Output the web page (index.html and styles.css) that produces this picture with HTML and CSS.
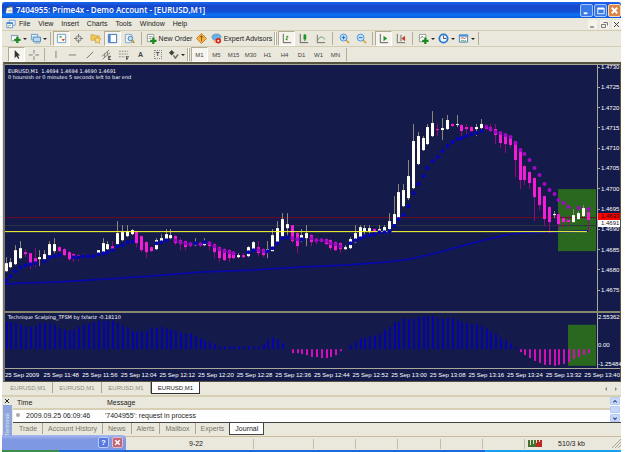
FILE: index.html
```html
<!DOCTYPE html>
<html lang="en">
<head>
<meta charset="utf-8">
<title>7404955: Prime4x - Demo Account - [EURUSD,M1]</title>
<link rel="stylesheet" href="styles.css">
</head>
<body>
<div class="window">
  <header class="titlebar">
    <svg class="icon" viewBox="0 0 12 12"><path d="M2 4 9 2v8H1z" fill="#f4f1dc"/><path d="M1 5q4-5 8-2" stroke="#6a7c5a" fill="none"/><path d="M4 7h4" stroke="#a4a08c"/></svg>
    <h1>7404955: Prime4x - Demo Account - [EURUSD,M1]</h1>
    <button class="cap" aria-label="Minimize"><svg viewBox="0 0 12 12"><path d="M3 9h4" stroke="#fff" stroke-width="2"/></svg></button>
    <button class="cap" aria-label="Maximize"><svg viewBox="0 0 12 12"><path d="M3 3.5h7v6H3z" stroke="#fff" fill="none"/><path d="M3 4h7" stroke="#fff" stroke-width="2"/></svg></button>
    <button class="cap cap-close" aria-label="Close"><svg viewBox="0 0 12 12"><path d="m3 3 6 6M9 3 3 9" stroke="#fff" stroke-width="2"/></svg></button>
  </header>

  <nav class="menubar">
    <svg class="icon" viewBox="0 0 12 12"><path d="M4 1.500h7v6H4z" fill="#eef6ff" stroke="#6a9ad0"/><path d="M1 4.500h7v6H1z" fill="#fff" stroke="#4a86cc"/><path d="M1 5h7" stroke="#4a86cc" stroke-width="2"/><path d="m3 9 1-2 1 1 1-1" stroke="#58a058" fill="none"/></svg>
    <button>File</button><button>View</button><button>Insert</button><button>Charts</button><button>Tools</button><button>Window</button><button>Help</button>
    <div class="mdi">
      <button aria-label="Minimize chart"><svg viewBox="0 0 9 9"><path d="M2 7h4" stroke="#444"/></svg></button>
      <button aria-label="Restore chart"><svg viewBox="0 0 9 9"><path d="M3.500 2.500h4v3M1.500 4.500h4v3h-4z" stroke="#777" fill="none"/></svg></button>
      <button aria-label="Close chart"><svg viewBox="0 0 9 9"><path d="m2 2 5 5M7 2 2 7" stroke="#444"/></svg></button>
    </div>
  </nav>

  <div class="toolbar">
    <button class="tool drop" aria-label="New chart"><svg viewBox="0 0 12 12"><path d="M1.500 2.500h7v6h-7z" fill="#fff" stroke="#8aa"/><path d="M1 3h8" stroke="#7aa0c0"/><path d="M8 4v7M4.500 7.500h7" stroke="#1c8a20" stroke-width="2.500"/></svg></button>
    <button class="tool drop" aria-label="Profiles"><svg viewBox="0 0 12 12"><path d="M1.500 1.500h7v6h-7z" fill="#d8ecfa" stroke="#6a98c4"/><path d="M3.500 4.500h8v5h-8z" fill="#b8d8f4" stroke="#5084b8"/><path d="M5 11h6" stroke="#86a8c8"/></svg></button>
    <i class="sep"></i>
    <button class="tool on" aria-label="Market Watch"><svg viewBox="0 0 12 12"><path d="M1.500 1.500h9v9h-9z" fill="#fff" stroke="#6c9cc8"/><path d="m3 5 2-2 2 2z" fill="#2a9a30"/><path d="m6 7 2 2 2-3z" fill="#d04420"/></svg></button>
    <button class="tool" aria-label="Data Window"><svg viewBox="0 0 12 12"><circle cx="6" cy="6" r="3" fill="none" stroke="#777"/><path d="M6 1v4M6 7v4M1 6h4M7 6h4" stroke="#777"/></svg></button>
    <button class="tool" aria-label="Navigator"><svg viewBox="0 0 12 12"><path d="M1 2h4l1 1h4v5H1z" fill="#f4c850" stroke="#b48a30" stroke-width=".5"/><path d="m8 4 1 2 3 .5-2 2 .5 3L8 10l-2 1 .5-3-2-1.500 2.500-.5z" fill="#ffe080" stroke="#b88820" stroke-width=".6"/></svg></button>
    <button class="tool on" aria-label="Terminal"><svg viewBox="0 0 12 12"><path d="M1.500 1.500h9v9h-9z" fill="#fff" stroke="#2c68bc"/><path d="M3 2v8" stroke="#4c88d4" stroke-width="2"/></svg></button>
    <button class="tool" aria-label="Strategy Tester"><svg viewBox="0 0 12 12"><path d="M1.500 1.500h7v9h-7z" fill="#eef4fa" stroke="#88a8c4"/><circle cx="7" cy="6" r="2.500" fill="#b8dcf4" stroke="#5080a8"/><path d="m9 8 2 3" stroke="#b89040" stroke-width="2"/></svg></button>
    <i class="sep wide"></i>
    <button class="tool text"><svg viewBox="0 0 12 12"><path d="M1.500 1.500h7v8h-7z" fill="#fff" stroke="#8a9a8a"/><path d="M3 4h4M3 6h3" stroke="#999"/><path d="M8 5v7M4.500 8.500h7" stroke="#1c8a20" stroke-width="2.500"/></svg><span>New Order</span></button>
    <button class="tool" aria-label="MetaEditor"><svg viewBox="0 0 12 12"><path d="m6 .5 5.500 5.500L6 11.500.5 6z" fill="#f4b848" stroke="#c47c20"/><path d="M6 3v6M4 5l2-2 2 2" stroke="#8c5010" fill="none"/></svg></button>
    <button class="tool text expert"><svg viewBox="0 0 12 12"><path d="M1 5q0-4 5-4t5 4l-3 3H3z" fill="#6ab0e8" stroke="#386ca0" stroke-width=".5"/><path d="M2 7q3 2 5-1l1 5H4z" fill="#f0c070"/><circle cx="8" cy="8.500" r="3" fill="#dc2018"/><path d="M7 7.500h2v2H7z" fill="#fff"/></svg><span>Expert Advisors</span></button>
    <i class="sep grip"></i>
    <button class="tool on" aria-label="Bar chart"><svg viewBox="0 0 12 12"><path d="M2.500 1v9.500H11" stroke="#555" fill="none"/><path d="M6.500 3v5M6.500 7H5M6.500 4H8" stroke="#188818" fill="none"/></svg></button>
    <button class="tool" aria-label="Candlesticks"><svg viewBox="0 0 12 12"><path d="M2.500 1v9.500H11" stroke="#555" fill="none"/><path d="M7.500 1v8" stroke="#188818"/><path d="M6 2h3v5H6z" fill="#189828"/></svg></button>
    <button class="tool" aria-label="Line chart"><svg viewBox="0 0 12 12"><path d="M2.500 2v8.500H11" stroke="#666" fill="none"/><path d="M3 8q3-7 8-1" stroke="#60a060" fill="none"/></svg></button>
    <i class="sep wide"></i>
    <button class="tool" aria-label="Zoom in"><svg viewBox="0 0 12 12"><path d="m7 7 4 4" stroke="#d8a840" stroke-width="2"/><circle cx="5" cy="5" r="3.800" fill="#c4e4fc" stroke="#4890d8"/><path d="M5 3v4M3 5h4" stroke="#2060b8"/></svg></button>
    <button class="tool" aria-label="Zoom out"><svg viewBox="0 0 12 12"><path d="m7 7 4 4" stroke="#d8a840" stroke-width="2"/><circle cx="5" cy="5" r="3.800" fill="#c4e4fc" stroke="#4890d8"/><path d="M3 5h4" stroke="#2060b8"/></svg></button>
    <i class="sep"></i>
    <button class="tool on" aria-label="Auto scroll"><svg viewBox="0 0 12 12"><path d="M2.500 1v9.500H11" stroke="#555" fill="none"/><path d="m6 3 4 3-4 3z" fill="#189828"/></svg></button>
    <button class="tool" aria-label="Chart shift"><svg viewBox="0 0 12 12"><path d="M2.500 1v9.500H11M6.500 2v7" stroke="#666" fill="none"/><path d="m11 3-4 3 4 3z" fill="#c83c28"/></svg></button>
    <i class="sep wide"></i>
    <button class="tool drop" aria-label="Indicators"><svg viewBox="0 0 12 12"><path d="M1.500 1.500h7v8h-7z" fill="#fff" stroke="#8a9a8a"/><path d="M3 6q1-4 3-1" stroke="#666" fill="none"/><path d="M8 5v7M4.500 8.500h7" stroke="#1c8a20" stroke-width="2.500"/></svg></button>
    <button class="tool drop" aria-label="Periods"><svg viewBox="0 0 12 12"><circle cx="6" cy="6" r="4.500" fill="#eef8ff" stroke="#2c78d0" stroke-width="2"/><path d="M6 3v3h3" stroke="#444" fill="none"/></svg></button>
    <button class="tool drop" aria-label="Templates"><svg viewBox="0 0 12 12"><path d="M1.500 2h9v8h-9z" fill="#fff" stroke="#4080c0"/><path d="M1 3h10" stroke="#4c90d8" stroke-width="2"/><path d="m3 6 2-1 2 1 2-1" stroke="#c04830" fill="none"/><path d="m3 9 2-1 2 1 2-1" stroke="#389038" fill="none"/></svg></button>
    <i class="sep"></i>
  </div>

  <div class="toolbar second">
    <button class="tool on" aria-label="Cursor"><svg viewBox="0 0 12 12"><path d="M4 1v9l2-2 2 3 1-1-1.500-3H10z" fill="#333"/></svg></button>
    <button class="tool" aria-label="Crosshair"><svg viewBox="0 0 12 12"><path d="M6.500 1v4M6.500 8v4M1 6.500h4M8 6.500h4" stroke="#777"/></svg></button>
    <i class="sep"></i>
    <button class="tool" aria-label="Vertical line"><svg viewBox="0 0 12 12"><path d="M6.500 2v8" stroke="#777"/></svg></button>
    <button class="tool" aria-label="Horizontal line"><svg viewBox="0 0 12 12"><path d="M2 6.500h8" stroke="#777"/></svg></button>
    <button class="tool" aria-label="Trendline"><svg viewBox="0 0 12 12"><path d="m3 10 7-7" stroke="#666"/></svg></button>
    <button class="tool" aria-label="Channel"><svg viewBox="0 0 12 12"><path d="m1 8 8-7M2 11l8-7M4 5v4M7 3v4" stroke="#777"/><path d="M8 8h3M8 9.500h2M8 11.500h3M8.500 8v4" stroke="#444"/></svg></button>
    <button class="tool" aria-label="Fibonacci"><svg viewBox="0 0 12 12"><path d="M1 2.500h10M1 5.500h10M1 8.500h7" stroke="#888" stroke-dasharray="2 1"/><path d="M9 8.500h3M9 10.500h2M9.500 8v4" stroke="#444"/></svg></button>
    <button class="tool letter" aria-label="Text">A</button>
    <button class="tool letter" aria-label="Text label"><span class="boxed">T</span></button>
    <button class="tool drop" aria-label="Arrows"><svg viewBox="0 0 12 12"><path d="m4 1 3 3-3 3-3-3z" fill="#444"/><path d="m6 7 2 3 3-4" stroke="#666" fill="none" stroke-width="1.500"/></svg></button>
    <i class="sep grip"></i>
    <button class="tool on">M1</button><button class="tool">M5</button><button class="tool">M15</button><button class="tool">M30</button><button class="tool">H1</button><button class="tool">H4</button><button class="tool">D1</button><button class="tool">W1</button><button class="tool">MN</button>
    <i class="sep"></i>
  </div>

  <main class="chart">
    <section class="pane price">
      <svg class="plot" id="price-plot" viewBox="5 65 593 246" preserveAspectRatio="none" role="img" aria-label="EURUSD one minute candles"></svg>
      <div class="legend"><p>EURUSD,M1&nbsp; 1.4694 1.4694 1.4690 1.4691</p><p>0 hoursish or 0 minutes 5 seconds left to bar end</p></div>
      <div class="scale">
        <span>1.4730</span><span>1.4725</span><span>1.4720</span><span>1.4715</span><span>1.4710</span><span>1.4705</span><span>1.4700</span><span>1.4695</span><span>1.4690</span><span>1.4685</span><span>1.4680</span><span>1.4675</span>
        <b class="tag ask">1.4693</b><b class="tag bid">1.4691</b>
      </div>
    </section>
    <section class="pane osc">
      <svg class="plot" id="osc-plot" viewBox="5 313 593 56" preserveAspectRatio="none" role="img" aria-label="Oscillator histogram"></svg>
      <div class="legend"><p>Technique Scalping_TFSM by fxfariz -0.18110</p></div>
      <div class="scale"><span>2.55362</span><span>0.00</span><span>-1.25484</span></div>
    </section>
    <div class="times">
      <span>25 Sep 2009</span><span>25 Sep 11:48</span><span>25 Sep 11:56</span><span>25 Sep 12:04</span><span>25 Sep 12:12</span><span>25 Sep 12:20</span><span>25 Sep 12:28</span><span>25 Sep 12:36</span><span>25 Sep 12:44</span><span>25 Sep 12:52</span><span>25 Sep 13:00</span><span>25 Sep 13:08</span><span>25 Sep 13:16</span><span>25 Sep 13:24</span><span>25 Sep 13:32</span><span>25 Sep 13:40</span>
    </div>
  </main>

  <nav class="chart-tabs">
    <button>EURUSD,M1</button><button>EURUSD,M1</button><button>EURUSD,M1</button><button class="active">EURUSD,M1</button>
    <span class="arrows"><i></i><i class="next"></i></span>
  </nav>

  <section class="terminal">
    <aside class="strip"><button aria-label="Close terminal"><svg viewBox="0 0 6 6"><path d="m1 1 4 4M5 1 1 5" stroke="#222"/></svg></button><span>Terminal</span></aside>
    <div class="panel">
      <div class="log">
        <table>
          <thead><tr><th class="when">Time</th><th>Message</th></tr></thead>
          <tbody><tr><td class="when">2009.09.25 06:09:46</td><td>'7404955': request in process</td></tr></tbody>
        </table>
        <div class="scroll"><button aria-label="Scroll up"><svg viewBox="0 0 8 8"><path d="m2 5 2-2 2 2" stroke="#3c5488" fill="none" stroke-width="1.500"/></svg></button><i></i><button aria-label="Scroll down"><svg viewBox="0 0 8 8"><path d="m2 3 2 2 2-2" stroke="#3c5488" fill="none" stroke-width="1.500"/></svg></button></div>
      </div>
      <nav class="term-tabs"><button>Trade</button><button>Account History</button><button>News</button><button>Alerts</button><button>Mailbox</button><button>Experts</button><button class="active">Journal</button></nav>
    </div>
  </section>

  <footer class="status">
    <div class="popup"><button aria-label="Help">?</button><button class="x" aria-label="Close popup"><svg viewBox="0 0 12 12"><path d="m3 3 6 6M9 3 3 9" stroke="#fff" stroke-width="2"/></svg></button></div>
    <span class="profile">9-22</span>
    <span class="cell first"></span><span class="cell"></span><span class="cell"></span><span class="cell"></span><span class="cell"></span><span class="cell"></span>
    <span class="traffic"><svg viewBox="0 0 14 9"><path d="M0 1h8v7H0z" fill="#447030"/><path d="M8 1h6v7H8z" fill="#b8281c"/><path d="M2.500 1v5M5.500 1v4M8.500 1v3M11.500 1v2" stroke="#e6e4d4"/></svg>510/3 kb</span>
    <svg class="resize" viewBox="0 0 9 9"><path d="m0 9 9-9M3 9l6-6M6 9l3-3" stroke="#aaa694"/></svg>
  </footer>
  <div class="taskbar"></div>
</div>
<script src="chart.js"></script>
</body>
</html>
```
FILE: styles.css
```css
* { box-sizing: border-box; }
body {
  margin: 0;
  padding: 2px 4px 0 2px;
  background: #fff;
  color: #222;
  font: 7px/10px "Liberation Sans", Arial, sans-serif;
}
h1, p { margin: 0; }
button {
  margin: 0;
  padding: 0;
  border: 0;
  background: none;
  color: inherit;
  font: inherit;
}
svg { display: block; }
.window {
  display: flex;
  flex-direction: column;
  height: calc(100vh - 2px);
  background: #eae8dc;
}
.icon { width: 10px; height: 10px; }

/* title bar */
.titlebar {
  display: flex;
  align-items: center;
  gap: 1px;
  height: 16px;
  padding-left: 3px;
  border-radius: 3px 3px 0 0;
  background: linear-gradient(#1a66f0, #1648cc 25%, #1450d4 60%, #0a74f4 80%, #0c58e0);
}
.titlebar h1 {
  flex: 1;
  color: #fff;
  font: 600 8px/12px "Open Sans", sans-serif;
  white-space: nowrap;
}
.cap {
  width: 13px;
  height: 13px;
  border: 1px solid #a8c4f8;
  border-radius: 2px;
  background: #3a7ae8;
}
.cap-close { background: #d8864a; border-color: #f4d8b8; }

/* menu */
.menubar {
  display: flex;
  align-items: center;
  gap: 8px;
  height: 12px;
  padding-left: 3px;
}
.menubar .icon { width: 12px; margin-right: -6px; }
.mdi { display: flex; gap: 3px; margin-left: auto; }
.mdi button { width: 9px; height: 9px; background: #f4f2ea; }

/* toolbars */
.toolbar {
  display: flex;
  align-items: center;
  height: 16px;
  padding-left: 6px;
  border-top: 1px solid #d4ceb0;
}
.tool {
  display: flex;
  flex: none;
  align-items: center;
  justify-content: center;
  gap: 2px;
  width: 17px;
  height: 15px;
  color: #444;
}
.second .tool { font-size: 6px; }
.tool svg { flex: none; width: 11px; height: 11px; }
.tool.on { border: 1px solid; border-color: #b0ac98 #fff #fff #b0ac98; background: #f6f4ec; }
.tool.drop { width: 20px; }
.tool.drop::after {
  content: "";
  border: 2px solid transparent;
  border-top-color: #222;
  border-bottom: 0;
}
.tool.text { width: 48px; color: #222; white-space: nowrap; }
.tool.expert { width: 63px; }
.tool.letter { font-weight: 700; }
.second .letter { font-size: 7px; }
.boxed { width: 8px; border: 1px dotted #888; font-size: 6px; line-height: 7px; }
.sep { flex: none; width: 1px; height: 13px; margin: 0 2px; background: #b4ae98; }
.sep.wide { margin: 0 3px; }
.sep.grip { width: 3px; border: 1px solid #b4ae98; border-width: 0 1px; background: #fff; margin: 0 1px; }

/* chart */
.chart {
  display: grid;
  flex: 1;
  grid-template-rows: 248fr 58fr 12px;
  min-height: 0;
  margin-left: 1px;
  border: 1px solid #56543e;
  border-left: 2px solid #77766a;
  border-top-width: 2px;
  background: #141b4b;
  color: #fff;
  font-size: 6px;
  line-height: 8px;
}
.pane {
  position: relative;
  display: grid;
  grid-template-columns: 1fr 22px;
  min-height: 0;
  border-top: 1px solid #aaa898;
}
.osc { border-top: 2px solid #88866c; border-bottom: 1px solid #aaa898; }
.plot {
  width: 100%;
  height: 100%;
  min-height: 0;
}
.legend {
  position: absolute;
  top: 3px;
  left: 3px;
  font: 5px/6px "DejaVu Sans", sans-serif;
}
.osc .legend { top: 1px; }
.scale {
  position: relative;
  display: flex;
  flex-direction: column;
  justify-content: space-between;
  height: 94%;
  margin-top: -2px;
  white-space: nowrap;
}
.pane::after {
  content: "";
  position: absolute;
  top: 0;
  right: 22px;
  bottom: 0;
  border-right: 1px solid #aaa898;
}
.osc .scale { height: 100%; margin: 0; }
.osc .scale span:nth-child(2) { margin-top: 9px; }
.scale span { display: flex; align-items: center; gap: 1px; }
.price .scale span::before { content: ""; width: 2px; height: 1px; background: #aaa898; }
.tag {
  position: absolute;
  left: 0;
  right: 0;
  height: 7px;
  padding-left: 3px;
  font-weight: 400;
  line-height: 7px;
}
.ask { top: 65%; background: #f00; color: #200; }
.bid { top: 68%; background: #fff; color: #222; }
.times {
  display: grid;
  grid-template-columns: repeat(15, 1fr) auto;
  align-items: center;
  white-space: nowrap;
}

/* chart tabs */
.chart-tabs {
  display: flex;
  height: 15px;
  padding-left: 2px;
  border-bottom: 2px solid #d8d0b4;
  color: #8c8a80;
  font-size: 6px;
}
.chart-tabs button { width: 49px; height: 11px; border-right: 1px solid #aaa694; }
.chart-tabs .active { border: 1px solid #333; border-top: 0; background: #fff; color: #222; height: 12px; }
.arrows { display: flex; gap: 8px; margin: 5px 4px 0 auto; }
.arrows i { border: 2px solid transparent; border-left: 0; border-right-color: #888; height: 4px; }
.arrows .next { border-left: 2px solid #888; border-right: 0; }

/* terminal */
.terminal { display: flex; height: 39px; }
.strip { display: flex; flex-direction: column; width: 10px; }
.strip button { height: 8px; padding: 1px 2px; }
.strip svg { width: 6px; height: 6px; }
.strip span {
  flex: 1;
  margin-left: 1px;
  background: #8ea6dc;
  color: #dfe6f6;
  font-size: 6px;
  line-height: 9px;
  writing-mode: vertical-rl;
  transform: rotate(180deg);
}
.panel { flex: 1; margin-left: 1px; }
.log { display: flex; height: 26px; border-bottom: 1px solid #444; background: #fff; }
.log table { flex: 1; border-collapse: collapse; table-layout: fixed; }
.log th { height: 12px; padding: 0 4px; background: #eae8dc; border-bottom: 2px solid #d8d0b4; text-align: left; font-weight: 400; }
.log td { height: 13px; padding: 0 2px; white-space: nowrap; }
.log .when { width: 90px; }
.log td.when::before { content: ""; display: inline-block; width: 4px; height: 4px; margin: 0 6px 1px 1px; border-radius: 50%; background: #aaa; }
.scroll { display: flex; flex-direction: column; width: 10px; margin-right: 1px; gap: 1px; }
.scroll button, .scroll i { flex: 1; min-height: 0; border: 1px solid #b4c8f4; border-radius: 1px; background: #c8d8fa; }
.scroll svg { width: 8px; height: 7px; }
.term-tabs { display: flex; padding-left: 1px; color: #77756c; }
.term-tabs button { height: 11px; padding: 0 5px; border-right: 1px solid #aaa694; line-height: 11px; }
.term-tabs button:nth-last-child(2) { border: 0; }
.term-tabs .active { border: 1px solid #444; border-top: 0; background: #fff; color: #222; height: 12px; }

/* status bar */
.status { display: flex; align-items: center; height: 14px; border-top: 1px solid #c8bc98; }
.popup {
  display: flex;
  align-items: center;
  justify-content: flex-end;
  gap: 3px;
  width: 124px;
  height: 15px;
  margin-top: -2px;
  padding-right: 3px;
  border-radius: 0 4px 0 0;
  background: linear-gradient(#a8baf0, #8098e0 30%, #7e98e4);
}
.popup button { width: 11px; height: 11px; border: 1px solid #b8c8f8; border-radius: 2px; background: #5478dc; color: #fff; font-weight: 700; font-size: 8px; line-height: 9px; }
.popup .x { background: #c06878; border-color: #e0b8c8; }
.profile { width: 127px; padding-left: 63px; }
.cell { flex: 42; height: 10px; border-left: 1px solid #c4bea8; }
.cell.first { flex: 60; }
.traffic { display: flex; align-items: center; gap: 16px; height: 10px; padding-left: 3px; width: 88px; border-left: 1px solid #c4bea8; }
.traffic svg { width: 14px; height: 9px; }
.resize { width: 9px; height: 9px; }
.taskbar { height: 2px; background: linear-gradient(90deg, #3c8c4c 57px, #1c68dc 57px 78%, #18a0f0 78%); }
```
FILE: chart.js
```js
// Candles: [high, body top, body bottom, low, direction, fast average]
const candles = [
  [257,263,271,272,1,280],[258,262,267,268,1,276],[245,250,264,265,1,271],[241,248,258,259,1,267],
  [249,252,254,257,0,265],[253,253,264,269,0,264],[248,258,263,267,0,263],[250,257,259,266,1,0],
  [250,254,259,260,1,261],[241,244,255,257,1,257],[238,244,251,253,1,256],[246,247,251,252,0,255],
  [248,249,255,256,0,0],[251,252,259,261,0,0],[253,254,259,262,0,257],[254,255,258,261,0,257],
  [253,256,257,258,0,256],[254,256,257,258,0,256],[254,255,257,258,0,256],[250,250,254,255,1,254],
  [238,243,252,253,1,253],[241,244,249,250,1,252],[241,246,250,251,0,250],[221,233,244,246,1,246],
  [225,232,240,241,1,245],[225,231,236,237,1,242],[229,230,234,235,1,241],[231,231,243,247,0,0],
  [235,236,250,252,0,0],[241,242,252,258,0,0],[246,247,251,252,0,0],[238,240,249,250,1,243],
  [234,238,242,243,1,242],[229,234,240,241,1,240],[229,235,238,239,1,0],[235,236,243,245,0,240],
  [238,240,244,250,0,242],[240,241,247,250,0,243],[242,244,246,247,0,244],[238,242,245,246,1,243],
  [242,243,245,247,0,244],[238,242,245,246,1,242],[241,242,246,250,0,243],[243,244,252,258,0,246],
  [246,247,258,262,0,249],[248,249,260,261,0,251],[249,250,258,262,0,252],[251,252,258,259,0,253],
  [253,255,257,258,1,0],[253,255,257,258,0,0],[246,247,256,257,1,252],[241,242,249,250,1,250],
  [241,247,253,256,0,250],[248,249,255,257,0,251],[241,249,252,258,1,251],[229,235,251,251,1,248],
  [221,228,242,243,1,243],[213,219,236,237,1,238],[213,224,228,236,1,237],[225,225,241,243,0,238],
  [232,233,246,253,0,239],[229,235,240,242,1,239],[225,233,238,246,1,0],[234,235,242,246,0,238],
  [238,239,241,244,0,240],[238,239,241,242,0,240],[238,239,244,245,0,241],[239,240,248,250,0,243],
  [241,242,250,251,0,244],[242,243,249,253,0,246],[245,247,249,250,1,0],[237,239,248,249,1,243],
  [225,233,242,243,1,240],[225,227,238,239,1,238],[225,228,231,235,1,236],[225,228,231,235,1,235],
  [228,229,231,236,0,234],[225,229,231,234,1,232],[225,227,233,234,1,232],[213,221,229,232,1,231],
  [196,214,224,228,1,226],[184,192,218,220,1,219],[184,190,206,207,1,215],[160,176,198,200,1,206],
  [124,141,188,189,1,193],[132,136,164,165,1,184],[136,138,150,151,1,176],[124,127,144,145,1,168],
  [111,123,136,137,1,161],[124,129,130,136,0,157],[118,128,130,140,1,151],[115,120,129,130,1,146],
  [123,124,126,127,0,142],[115,124,125,127,1,139],[124,125,131,136,0,138],[124,127,129,136,0,136],
  [126,127,131,132,0,134],[124,127,129,136,1,133],[119,124,128,129,1,131],[124,126,129,130,0,127],
  [124,127,131,132,0,129],[124,129,135,144,0,132],[131,132,143,148,0,133],[134,135,144,153,0,135],
  [136,137,145,148,0,137],[141,141,160,177,0,143],[148,149,180,189,0,150],[165,166,180,185,0,154],
  [171,172,183,189,0,160],[177,178,197,221,0,168],[187,187,205,210,0,175],[195,196,219,226,0,184],
  [206,207,222,233,0,190],[211,214,215,218,1,194],[213,214,224,229,0,200],[216,218,222,228,0,203],
  [216,220,222,226,0,207],[209,215,222,222,1,0],[211,213,219,219,1,208],[205,208,216,217,1,0],
  [208,212,220,231,0,209]
];

// Histogram bar ends, one for each candle; 0 leaves a gap
const bars = [
  322,322,323,325,327,327,326,323,323,324,325,329,330,331,330,327,325,324,322,321,321,321,321,323,326,328,
  331,332,332,331,328,328,327,329,330,331,333,334,334,336,339,341,343,345,347,347,347,347,347,347,347,347,
  347,345,340,338,340,344,0,354,354,355,356,358,358,359,359,358,356,352,0,346,342,339,338,337,336,334,330,
  327,322,322,318,319,319,317,316,316,316,318,319,318,318,320,322,323,324,324,326,329,332,334,338,341,344,
  348,353,356,359,362,364,366,366,367,366,365,363,360,358,356,354
];

const NS = "http://www.w3.org/2000/svg";
const STEP = 4.85;
const FIRST = 5.5;
const ZERO = 350;

function add(svg, tag, attrs) {
  const node = document.createElementNS(NS, tag);
  for (const name in attrs) node.setAttribute(name, attrs[name]);
  svg.appendChild(node);
}
function rect(svg, x, y, width, height, fill) {
  add(svg, "rect", { x, y, width, height, fill });
}

const price = document.getElementById("price-plot");
rect(price, 558, 189, 38, 62, "#2a681f");
rect(price, 5, 217, 593, 1, "#6c0c24");
rect(price, 5, 225, 593, 1, "#2c3440");
add(price, "path", {
  d: "M5 284 22 283 55 282 105 279 150 276 200 272 250 270 300 267 345 265 385 262 410 259 440 252 465 245 484 240 505 235 520 233 545 232 588 231",
  fill: "none", stroke: "#0808a8", "stroke-width": 1.6
});
candles.forEach(([high, top, bottom, low, up], i) => {
  const x = Math.round(FIRST + i * STEP);
  rect(price, x, high, 1, low - high, up ? "#8c8878" : "#8c0c78");
  rect(price, x - 1, top, 3, bottom - top, up ? "#fffff4" : "#f41cd4");
});
rect(price, 5, 231, 582, 1, "#ffff30");
candles.forEach((c, i) => {
  if (!c[5]) return;
  const falling = i > 98 || (!c[4] && i > 34 && i < 72);
  add(price, "circle", {
    cx: Math.round(FIRST + i * STEP) + 0.5, cy: c[5], r: 2,
    fill: falling ? "#a408c4" : "#0404b8"
  });
});

const osc = document.getElementById("osc-plot");
rect(osc, 568, 325, 28, 42, "#2a681f");
bars.forEach((end, i) => {
  if (!end) return;
  const x = Math.round(FIRST + i * STEP);
  const up = end < ZERO;
  rect(osc, x, up ? end : ZERO, 2, Math.abs(end - ZERO), up ? "#0404a8" : "#d010b4");
});
```
